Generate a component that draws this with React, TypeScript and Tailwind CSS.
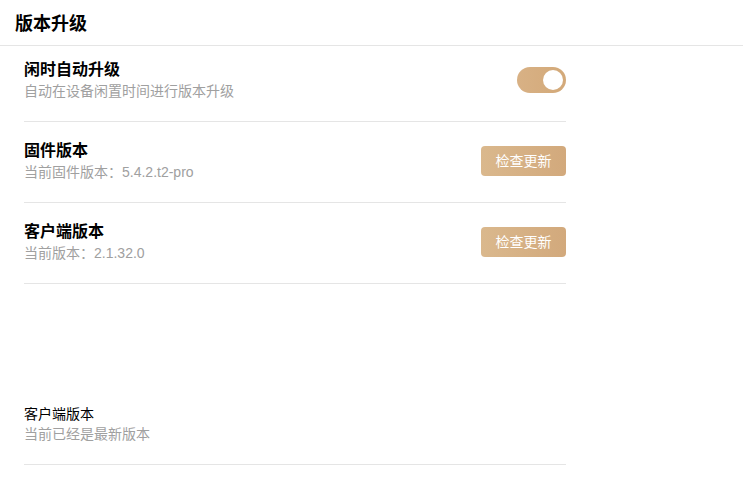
import React, { useState } from 'react';

const font = { fontFamily: "'Liberation Sans', 'Noto Sans CJK SC', sans-serif" };

function Toggle({ on, onChange }: { on: boolean; onChange: () => void }) {
  return (
    <button
      onClick={onChange}
      className={`relative w-[49px] h-[26px] rounded-full flex items-center px-[3px] ${
        on ? 'justify-end bg-gradient-to-r from-[#d8b185] to-[#d3a979]' : 'justify-start bg-[#dcdcdc]'
      }`}
    >
      <span className="w-[20px] h-[20px] rounded-full bg-white" />
    </button>
  );
}

function CheckButton() {
  return (
    <button className="w-[85px] h-[30px] rounded-[4px] bg-gradient-to-r from-[#dab88d] to-[#d2a97c] text-white text-[14px] leading-[30px]">
      检查更新
    </button>
  );
}

export default function App() {
  const [auto, setAuto] = useState(true);

  return (
    <div className="w-[743px] h-[491px] bg-white text-black overflow-hidden" style={font}>
      {/* Header */}
      <div className="h-[46px] pl-[15px] border-b border-[#e5e5e5] flex items-start pt-[12px]">
        <h1 className="text-[18px] leading-[24px] font-bold">版本升级</h1>
      </div>

      <div className="ml-[24px] w-[542px]">
        {/* Idle auto upgrade */}
        <div className="flex items-center justify-between pt-[13px] pb-[20px] border-b border-[#e5e5e5]">
          <div className="flex flex-col">
            <span className="text-[16px] leading-[22px] font-bold">闲时自动升级</span>
            <span className="text-[14px] leading-[20px] text-[#a0a0a0]">自动在设备闲置时间进行版本升级</span>
          </div>
          <Toggle on={auto} onChange={() => setAuto(!auto)} />
        </div>

        {/* Firmware */}
        <div className="flex items-center justify-between pt-[18px] pb-[20px] border-b border-[#e5e5e5]">
          <div className="flex flex-col">
            <span className="text-[16px] leading-[22px] font-bold">固件版本</span>
            <span className="text-[14px] leading-[20px] text-[#a0a0a0]">当前固件版本：5.4.2.t2-pro</span>
          </div>
          <CheckButton />
        </div>

        {/* Client */}
        <div className="flex items-center justify-between pt-[18px] pb-[20px] border-b border-[#e5e5e5]">
          <div className="flex flex-col">
            <span className="text-[16px] leading-[22px] font-bold">客户端版本</span>
            <span className="text-[14px] leading-[20px] text-[#a0a0a0]">当前版本：2.1.32.0</span>
          </div>
          <CheckButton />
        </div>

        {/* Latest notice */}
        <div className="flex flex-col pt-[120px] pb-[20px] border-b border-[#e5e5e5]">
          <span className="text-[14px] leading-[20px]">客户端版本</span>
          <span className="text-[14px] leading-[20px] text-[#a0a0a0]">当前已经是最新版本</span>
        </div>
      </div>
    </div>
  );
}
